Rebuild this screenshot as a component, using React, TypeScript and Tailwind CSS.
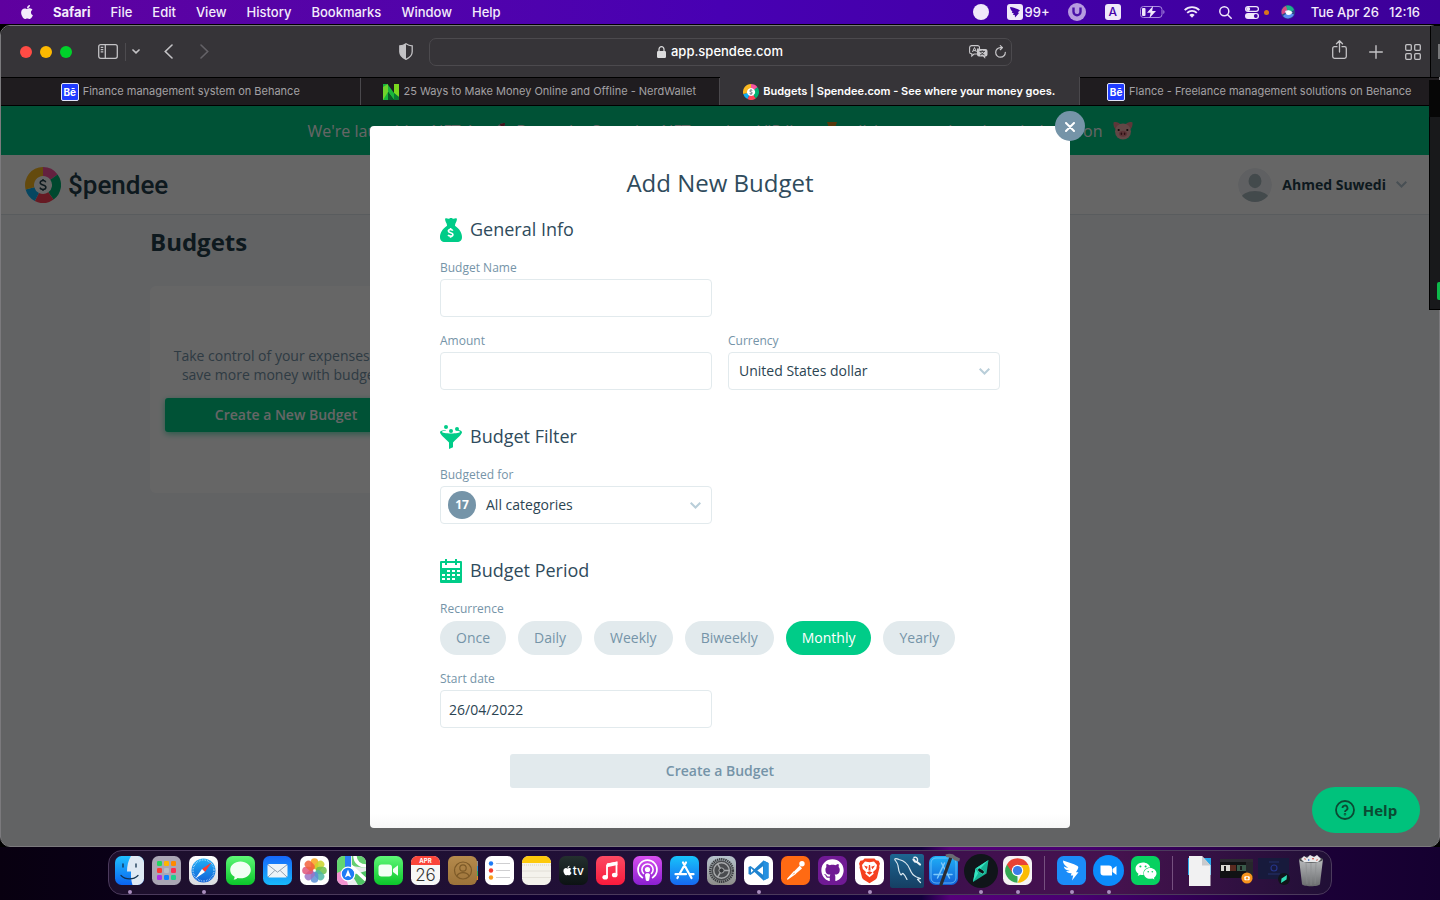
import React from "react";
import { FaApple, FaGithub, FaWeixin } from "react-icons/fa";

const UI = "font-['Inter','Liberation_Sans',sans-serif]";
const WEB = "font-['Open_Sans','Noto_Sans',sans-serif]";

/* ---------- menu bar ---------- */

function MenuBar() {
  const menus = ["File", "Edit", "View", "History", "Bookmarks", "Window", "Help"];
  return (
    <header className="flex h-6 items-center bg-linear-to-r from-[#5f009f] via-[#4800b3] to-[#3d0099] text-[13px] leading-[22px] font-medium text-[#f3ecfb]">
      <FaApple className="ml-[19px] size-4" />
      <nav className="ml-[18px] flex items-center gap-5">
        <span className="font-bold">Safari</span>
        {menus.map((m) => (
          <span key={m}>{m}</span>
        ))}
      </nav>
      <div className="ml-auto flex items-center pr-5">
        <span className="size-4 rounded-full bg-[#f0e8fa]" />
        <svg className="ml-[18px] size-4" viewBox="0 0 16 16">
          <rect width="16" height="16" rx="3" fill="#f0e8fa" />
          <path d="M3 3c3.200.5 6.500 1.200 10 3.500l-2.200 1.700 1.200.8-4 4.500-.2-2.400-2-.4 1-1.400-2-.5.6-1.200C4.300 6.800 3.300 5 3 3z" fill="#4400a8" />
        </svg>
        <span className="ml-[2px]">99+</span>
        <svg className="ml-[18px] size-[18px]" viewBox="0 0 18 18">
          <circle cx="9" cy="9" r="9" fill="#b79be0" />
          <path d="M5.500 4.500v4.300a3.500 3.500 0 0 0 7 0V4.500" fill="none" stroke="#4a12a8" strokeWidth="2.400" />
        </svg>
        <span className="ml-[19px] flex size-4 items-center justify-center rounded-[3px] bg-[#f0e8fa] text-[12px] leading-4 text-[#4400a8]">A</span>
        <svg className="ml-[19px] h-3 w-[25px]" viewBox="0 0 25 12">
          <rect x=".5" y=".5" width="21.500" height="11" rx="3" fill="none" stroke="#a98ade" />
          <path d="M23.300 4v4c1.600-.5 1.600-3.500 0-4z" fill="#a98ade" />
          <rect x="2" y="2" width="3.500" height="8" rx="1" fill="#f0e8fa" />
          <path d="M13 0 7 6.800h3.600L9.500 12l6.500-7h-3.800z" fill="#f0e8fa" />
        </svg>
        <svg className="ml-[19px] h-3 w-4" viewBox="0 0 16 12" fill="none" stroke="#f0e8fa" strokeWidth="1.900">
          <path d="M.7 4.200a10.300 10.300 0 0 1 14.600 0M3.200 6.900a6.800 6.800 0 0 1 9.600 0" />
          <path d="M8 11.700 5.400 9.100a3.700 3.700 0 0 1 5.200 0z" fill="#f0e8fa" stroke="none" />
        </svg>
        <svg className="ml-[19px] size-[13px]" viewBox="0 0 13 13" fill="none" stroke="#f0e8fa" strokeWidth="1.500" strokeLinecap="round">
          <circle cx="5.300" cy="5.300" r="4.500" />
          <path d="m8.700 8.700 3.500 3.500" />
        </svg>
        <svg className="ml-[13px] h-[13px] w-[14px]" viewBox="0 0 14 13">
          <rect x=".6" y=".6" width="12.800" height="4.800" rx="2.400" fill="none" stroke="#f0e8fa" strokeWidth="1.200" />
          <circle cx="3.200" cy="3" r="2" fill="#f0e8fa" />
          <rect y="7" width="14" height="6" rx="3" fill="#f0e8fa" />
          <circle cx="10.800" cy="10" r="1.900" fill="#4400a8" />
        </svg>
        <span className="ml-[5px] size-[5px] rounded-full bg-[#d9761a]" />
        <svg className="ml-[12px] size-[14px]" viewBox="0 0 14 14">
          <circle cx="7" cy="7" r="7" fill="#2b4a86" />
          <path d="M1 9.500A6.500 6.500 0 0 1 4.500 1C7 2 7 5 6 7z" fill="#d84a86" />
          <path d="M5 .7a6.400 6.400 0 0 1 8 4.300c-2.500 2-5 2-6.500 1z" fill="#1fae8c" />
          <path d="M2 11c3-3 8-3 11-1.500A6.500 6.500 0 0 1 2 11z" fill="#5b8df2" />
          <path d="M4 6c3-1.500 6-1 7.500 1.500C9.500 10.500 6.500 10.500 5 9z" fill="#dff3ff" />
          <circle cx="7.600" cy="7.600" r="2.200" fill="#fff" />
        </svg>
        <span className="ml-4">Tue Apr 26</span>
        <span className="ml-[10px]">12:16</span>
      </div>
    </header>
  );
}

/* ---------- Safari chrome ---------- */

function Toolbar() {
  return (
    <div className="grid h-[52px] grid-cols-[1fr_583px_1fr] items-center border-b border-black bg-[#363438] text-[#c3c2c5]">
      <div className="flex items-center pl-[19px]">
        <div className="flex gap-2">
          <span className="size-3 rounded-full bg-[#ff4b45]" />
          <span className="size-3 rounded-full bg-[#fdb900]" />
          <span className="size-3 rounded-full bg-[#00d22a]" />
        </div>
        <button aria-label="Sidebar" className="ml-[26px]">
          <svg className="h-[15px] w-5" viewBox="0 0 20 15" fill="none" stroke="currentColor" strokeWidth="1.300">
            <rect x=".7" y=".7" width="18.600" height="13.600" rx="2" />
            <path d="M7.300.7v13.600M2.700 3.300h2.600M2.700 5.600h2.600M2.700 7.900h2.600" />
          </svg>
        </button>
        <span className="ml-[7px] h-[18px] w-px bg-[#4d4b4f]" />
        <button aria-label="Tab groups" className="ml-[6px]">
          <svg className="h-[5px] w-2" viewBox="0 0 8 5" fill="none" stroke="currentColor" strokeWidth="1.700" strokeLinecap="round">
            <path d="m1 1 3 2.800L7 1" />
          </svg>
        </button>
        <button aria-label="Back" className="ml-6">
          <svg className="h-[15px] w-[9px]" viewBox="0 0 9 15" fill="none" stroke="currentColor" strokeWidth="1.600" strokeLinecap="round">
            <path d="M8 1 1.300 7.500 8 14" />
          </svg>
        </button>
        <button aria-label="Forward" className="ml-[27px] text-[#646267]">
          <svg className="h-[15px] w-[9px]" viewBox="0 0 9 15" fill="none" stroke="currentColor" strokeWidth="1.600" strokeLinecap="round">
            <path d="m1 1 6.700 6.500L1 14" />
          </svg>
        </button>
        <button aria-label="Privacy report" className="mr-4 ml-auto">
          <svg className="h-[17px] w-[14px]" viewBox="0 0 14 17">
            <path d="M7 .7C5 2.100 3 2.700.8 2.800v6C.8 12.500 3.500 14.800 7 16.300c3.500-1.500 6.200-3.800 6.200-7.500v-6C11 2.700 9 2.100 7 .7z" fill="none" stroke="currentColor" strokeWidth="1.300" />
            <path d="M7 .7C5 2.100 3 2.700.8 2.800v6C.8 12.500 3.500 14.800 7 16.300z" fill="currentColor" />
          </svg>
        </button>
      </div>
      <div className="relative flex h-7 items-center justify-center rounded-[7px] border border-[#4c4a4e] text-[13px] font-medium text-white">
        <svg className="mr-[5px] h-3 w-[9px]" viewBox="0 0 9 12">
          <rect y="5" width="9" height="7" rx="1.300" fill="#dcdcdd" />
          <path d="M2 5.500V3.200a2.500 2.500 0 0 1 5 0v2.300" fill="none" stroke="#dcdcdd" strokeWidth="1.200" />
        </svg>
        <span>app.spendee.com</span>
        <div className="absolute right-[5px] flex items-center gap-[7px] text-[#c9c8cb]">
          <svg className="h-[14px] w-[19px]" viewBox="0 0 19 14">
            <path d="M2.500.6h6a2 2 0 0 1 2 2V4H8.500v5H5L2.800 11V8.800H2.300A1.800 1.800 0 0 1 .6 7V2.600a2 2 0 0 1 1.900-2z" fill="none" stroke="currentColor" strokeWidth="1.100" />
            <path d="M3.500 7 5.500 2.500 7.400 7M4.200 5.600h2.600" fill="none" stroke="currentColor" strokeWidth="1" />
            <path d="M10 4h6.500a2 2 0 0 1 2 2v3.500a2 2 0 0 1-2 2h-.3v2.200L14 11.500h-4a2 2 0 0 1-2-2V6a2 2 0 0 1 2-2z" fill="currentColor" />
            <path d="M10.500 6.400h5.500M13.200 5.300v1.100M15 6.400c-.5 1.700-2 3-4 3.600M11.500 6.400c.5 1.700 2 3 4 3.600" fill="none" stroke="#363438" strokeWidth=".9" />
          </svg>
          <svg className="h-[13px] w-[11px]" viewBox="0 0 11 13" fill="none" stroke="currentColor" strokeWidth="1.200" strokeLinecap="round" strokeLinejoin="round">
            <path d="M10.300 7.300A4.800 4.800 0 1 1 5.500 2.600h1.800M5.300.6l2.200 2-2.200 2.100" />
          </svg>
        </div>
      </div>
      <div className="flex items-center justify-end gap-[22px] pr-[18px]">
        <button aria-label="Share" className="-mt-1">
          <svg className="h-[19px] w-[15px]" viewBox="0 0 15 19" fill="none" stroke="currentColor" strokeWidth="1.300" strokeLinecap="round" strokeLinejoin="round">
            <path d="M5 6.700H2.500A1.800 1.800 0 0 0 .7 8.500v8a1.800 1.800 0 0 0 1.800 1.800h10a1.800 1.800 0 0 0 1.800-1.800v-8a1.800 1.800 0 0 0-1.800-1.800H10M7.500 12V1M4.500 3.800l3-3 3 3" />
          </svg>
        </button>
        <button aria-label="New tab">
          <svg className="size-[14px]" viewBox="0 0 14 14" stroke="currentColor" strokeWidth="1.400" strokeLinecap="round">
            <path d="M7 .7v12.600M.7 7h12.600" />
          </svg>
        </button>
        <button aria-label="Tab overview">
          <svg className="size-4" viewBox="0 0 16 16" fill="none" stroke="currentColor" strokeWidth="1.300">
            <rect x=".7" y=".7" width="5.600" height="5.600" rx="1" />
            <rect x="9.700" y=".7" width="5.600" height="5.600" rx="1" />
            <rect x=".7" y="9.700" width="5.600" height="5.600" rx="1" />
            <rect x="9.700" y="9.700" width="5.600" height="5.600" rx="1" />
          </svg>
        </button>
      </div>
    </div>
  );
}

function BehanceIcon() {
  return (
    <span className="flex size-[18px] shrink-0 items-center justify-center rounded-[2px] border border-[#e4e6f8] bg-[#1f3cff] text-[10px] leading-4 font-bold text-white">
      Bē
    </span>
  );
}

function NerdIcon() {
  return (
    <svg className="size-4 shrink-0" viewBox="0 0 16 16">
      <path d="M0 0h4.500L11 9V0h5v16h-5L5 8v8H0z" fill="#19b53c" />
      <path d="M0 3 5 0v8L0 16z" fill="#6fd32c" />
      <path d="M11 0h5v13l-5-4z" fill="#7ad81f" />
      <path d="M5 16V8l6 8z" fill="#0c5a28" />
      <path d="M11 9l5 4v3h-5z" fill="#0a7a33" />
    </svg>
  );
}

const WHEEL = [
  { d: "M18 0A18 18 0 0 1 32.600 7.400L25.300 12.700A9 9 0 0 0 18 9z", c: "#f7549f" },
  { d: "M32.600 7.400A18 18 0 0 1 28.600 32.600L23.300 25.300A9 9 0 0 0 25.300 12.700z", c: "#00b374" },
  { d: "M28.600 32.600A18 18 0 0 1 9.800 34L13.900 26A9 9 0 0 0 23.300 25.300z", c: "#ff4358" },
  { d: "M9.800 34A18 18 0 0 1 .6 22.500L9.300 20.200A9 9 0 0 0 13.900 26z", c: "#11aef0" },
  { d: "M.6 22.500A18 18 0 0 1 18 0V9A9 9 0 0 0 9.300 20.200z", c: "#f9b822" },
];

function Wheel({ className }: { className: string }) {
  return (
    <svg className={className} viewBox="0 0 36 36">
      <circle cx="18" cy="18" r="10.500" fill="#fff" />
      {WHEEL.map((s) => (
        <path key={s.c} d={s.d} fill={s.c} />
      ))}
      <path d="M20.800 15.200c-.5-1.100-1.500-1.600-2.800-1.600-1.600 0-2.800.8-2.800 2.100 0 3.100 5.700 1.400 5.700 4.500 0 1.400-1.200 2.200-2.900 2.200-1.500 0-2.600-.6-3.100-1.800M18 12v1.600M18 22.400V24" fill="none" stroke="#23404d" strokeWidth="1.500" />
    </svg>
  );
}

function Tabs() {
  const tabs = [
    { title: "Finance management system on Behance", icon: <BehanceIcon /> },
    { title: "25 Ways to Make Money Online and Offline - NerdWallet", icon: <NerdIcon /> },
    { title: "Budgets | Spendee.com - See where your money goes.", icon: <Wheel className="size-4 shrink-0" />, active: true },
    { title: "Flance - Freelance management solutions on Behance", icon: <BehanceIcon /> },
  ];
  return (
    <div className="grid h-7 grid-cols-4 border-b border-black text-[11px]">
      {tabs.map((t) => (
        <button
          key={t.title}
          className={
            t.active
              ? "-mt-px flex items-center justify-center gap-1 border-r border-[#4a484c] bg-[#363438] pt-px font-semibold whitespace-nowrap text-white"
              : "flex items-center justify-center gap-1 border-r border-[#4a484c] bg-[#1f1c1f] whitespace-nowrap text-[#a3a1a4] last:border-r-0"
          }
        >
          {t.icon}
          <span>{t.title}</span>
        </button>
      ))}
    </div>
  );
}

/* ---------- page behind the dialog ---------- */

function PigIcon() {
  return (
    <svg className="h-[19px] w-5" viewBox="0 0 20 19">
      <path d="M.5 1.500C3 .3 6 1.500 7.500 3.500L3 8.500C1 7 .2 4 .5 1.500zM19.500 1.500C17 .3 14 1.500 12.500 3.500L17 8.500c2-1.500 2.800-4.500 2.500-7z" fill="#e88a8f" />
      <ellipse cx="10" cy="10.500" rx="8" ry="8" fill="#f7b2ae" />
      <ellipse cx="10" cy="12.800" rx="4" ry="3" fill="#e57f88" />
      <ellipse cx="8.400" cy="12.800" rx=".8" ry="1.300" fill="#6b2530" />
      <ellipse cx="11.600" cy="12.800" rx=".8" ry="1.300" fill="#6b2530" />
      <circle cx="5.700" cy="9" r="1.100" fill="#2a1618" />
      <circle cx="14.300" cy="9" r="1.100" fill="#2a1618" />
    </svg>
  );
}

function PageBackground() {
  return (
    <div className="flex flex-1 flex-col bg-[#f5f7fa] text-[#23404d]">
      <div className="flex h-[49px] items-center justify-center bg-[#00cc88] text-base whitespace-nowrap text-white">
        <span>We're launching NFTs!</span>
        <svg className="mr-[10px] ml-4 size-[18px]" viewBox="0 0 18 18">
          <path d="M17 1c-5 0-9 3-11.500 8.500l3 3C14 10 17 6 17 1z" fill="#c9d3dd" />
          <path d="M17 1c-2 0-4 .5-5.500 1.500l4 4C16.500 5 17 3 17 1zM6 8 2 9.500l2 1.500zM10 12l-1.500 4-1.500-2z" fill="#a3324a" />
        </svg>
        <span>Be on the Spendee NFT product VIP list</span>
        <svg className="mr-[10px] ml-4 size-[18px]" viewBox="0 0 18 18">
          <path d="M4 0h10l-2 6H6z" fill="#d98a1c" />
          <circle cx="9" cy="12" r="5" fill="#f2b632" />
        </svg>
        <span>click to see what the mission is on</span>
        <span className="ml-[10px]">
          <PigIcon />
        </span>
      </div>
      <div className="flex h-[60px] items-center border-b border-[#dfe6ec] bg-white pr-8 pl-6">
        <Wheel className="size-9" />
        <span className="ml-[7px] font-['Roboto','Liberation_Sans',sans-serif] text-[26px] leading-9 font-medium">
          $pendee
        </span>
        <button className="ml-auto flex items-center text-sm font-bold">
          <svg className="size-[34px]" viewBox="0 0 34 34">
            <defs>
              <clipPath id="avatar">
                <circle cx="17" cy="17" r="17" />
              </clipPath>
            </defs>
            <g clipPath="url(#avatar)">
              <circle cx="17" cy="17" r="17" fill="#eef1f4" />
              <ellipse cx="17" cy="13" rx="6.500" ry="7.200" fill="#a9b8bf" />
              <ellipse cx="17" cy="30.500" rx="14" ry="7.500" fill="#a9b8bf" />
            </g>
          </svg>
          <span className="ml-[10px]">Ahmed Suwedi</span>
          <Chevron className="ml-[10px] h-[7px] w-[11px] text-[#b4c6d1]" />
        </button>
      </div>
      <main className="px-[149px] pt-[9px]">
        <h1 className="text-2xl leading-9 font-bold">Budgets</h1>
        <section className="mt-[26px] w-[272px] rounded-[6px] bg-white px-[15px] pt-[60px] pb-[61px] text-center text-sm">
          <p className="leading-[19px] text-[#7594a8]">
            Take control of your expenses and save more money with budgets!
          </p>
          <button className="mt-[14px] h-[34px] w-full rounded-[3px] bg-[#00cc88] font-semibold text-white shadow-[0_2px_6px_#00cc8899]">
            Create a New Budget
          </button>
        </section>
      </main>
    </div>
  );
}

/* ---------- dialog ---------- */

function Chevron({ className }: { className: string }) {
  return (
    <svg className={className} viewBox="0 0 11 7" fill="none" stroke="currentColor" strokeWidth="2">
      <path d="m.7.800 4.800 4.700L10.300.800" />
    </svg>
  );
}

function BagIcon() {
  return (
    <svg className="h-6 w-[22px]" viewBox="0 0 22 24">
      <path d="M5.300.6c1.200-.9 2.200.3 3.200.2 1-.1 1.500-.8 2.500-.8s1.500.7 2.500.8c1 .1 2-1.100 3.200-.2.700.6-.4 3.400-1.500 5.400 0 .8-.1 1.300-.3 1.700C19.500 10.500 22 15 22 19c0 3.500-1.800 5-5 5H5c-3.200 0-5-1.500-5-5 0-4 2.500-8.500 7.100-11.300-.2-.4-.3-.9-.3-1.700C5.700 4 4.600 1.200 5.300.6z" fill="#00cc88" />
      <path d="M12.700 12.700c-.3-.9-1.200-1.200-2.200-1.200-1.300 0-2.100.6-2.100 1.500 0 2.300 4.500 1.100 4.500 3.500 0 1.100-1 1.700-2.300 1.700-1.200 0-2.100-.4-2.500-1.300M10.600 10v1.500M10.600 18.200v1.600" fill="none" stroke="#fff" strokeWidth="1.700" />
    </svg>
  );
}

function FunnelIcon() {
  return (
    <svg className="h-6 w-[22px]" viewBox="0 0 22 24">
      <circle cx="6" cy="2" r="2" fill="#00cc88" />
      <circle cx="17" cy="4" r="2" fill="#00cc88" />
      <path d="M0 7.200c0-1.500 2.500-2 5.500-2.300l.6.700C3.500 5.900 2 6.300 2 7s4 1.500 9 1.500 9-.8 9-1.500c0-.5-1-.9-2.500-1.200l.8-.7C20.500 5.500 22 6.200 22 7.200c0 2-4.500 5.600-9 10.300v4.700L9 24v-6.500C4.500 12.800 0 9.200 0 7.200z" fill="#00cc88" />
      <circle cx="11" cy="6" r="2" fill="#00cc88" />
    </svg>
  );
}

function CalendarIcon() {
  const cells = [
    [7, 11], [12, 11], [17, 11],
    [2, 15], [7, 15], [12, 15], [17, 15],
    [2, 19], [7, 19], [12, 19],
  ];
  return (
    <svg className="h-6 w-[22px]" viewBox="0 0 22 24">
      <path d="M1 2h4V0h2v2h8V0h2v2h4a1 1 0 0 1 1 1v20a1 1 0 0 1-1 1H1a1 1 0 0 1-1-1V3a1 1 0 0 1 1-1z" fill="#00cc88" />
      <path d="M2 4h3v2h2V4h8v2h2V4h3v5H2z" fill="#fff" />
      {cells.map(([x, y]) => (
        <rect key={`${x}-${y}`} x={x} y={y} width="3" height="2" fill="#fff" />
      ))}
    </svg>
  );
}

function SectionTitle({ icon, children }: { icon: React.ReactNode; children: string }) {
  return (
    <h3 className="flex h-6 items-start gap-2 text-lg leading-[22px] text-[#2f4b5c]">
      {icon}
      {children}
    </h3>
  );
}

const LABEL = "block text-xs leading-4 text-[#7594a8]";
const FIELD =
  "mt-[3px] block h-[38px] w-full rounded-[4px] border border-[#e2eaed] bg-white px-2 text-sm text-[#2b4452] outline-none";

function BudgetDialog() {
  const periods = ["Once", "Daily", "Weekly", "Biweekly", "Monthly", "Yearly"];
  return (
    <div
      role="dialog"
      aria-labelledby="dialog-title"
      className="relative w-[700px] rounded-[4px] bg-[linear-gradient(to_top,#f7f7f7,#fff_14px)] px-[70px] pt-[41px] pb-10"
    >
      <button
        aria-label="Close"
        className="absolute -top-[15px] -right-[15px] flex size-[30px] items-center justify-center rounded-full bg-[#7594a8]"
      >
        <svg className="mt-px size-[10px]" viewBox="0 0 10 10" stroke="#fff" strokeWidth="2" strokeLinecap="round">
          <path d="m1 1 8 8M9 1 1 9" />
        </svg>
      </button>
      <h2 id="dialog-title" className="text-center text-2xl leading-8 text-[#2f4b5c]">
        Add New Budget
      </h2>

      <section className="mt-[19px]">
        <SectionTitle icon={<BagIcon />}>General Info</SectionTitle>
        <div className="mt-[18px] grid grid-cols-2 gap-4">
          <div>
            <label htmlFor="name" className={LABEL}>Budget Name</label>
            <input id="name" className={FIELD} />
          </div>
          <div className="col-start-1">
            <label htmlFor="amount" className={LABEL}>Amount</label>
            <input id="amount" className={FIELD} />
          </div>
          <div>
            <label htmlFor="currency" className={LABEL}>Currency</label>
            <div className="relative">
              <select
                id="currency"
                className="mt-[3px] block h-[38px] w-full appearance-none rounded-[4px] border border-[#e2eaed] bg-white px-[10px] text-sm text-[#2b4452] outline-none"
              >
                <option>United States dollar</option>
              </select>
              <Chevron className="pointer-events-none absolute top-4 right-[10px] h-[7px] w-[11px] text-[#b9ced9]" />
            </div>
          </div>
        </div>
      </section>

      <section className="mt-[35px]">
        <SectionTitle icon={<FunnelIcon />}>Budget Filter</SectionTitle>
        <div className="mt-[18px] w-[272px]">
          <span id="budgeted" className={LABEL}>Budgeted for</span>
          <button
            aria-labelledby="budgeted"
            className="mt-[3px] flex h-[38px] w-full items-center rounded-[4px] border border-[#e2eaed] bg-white pr-[10px] pl-[7px] text-sm text-[#2b4452]"
          >
            <span className="flex size-7 items-center justify-center rounded-full bg-[#7594a8] text-xs font-bold text-white">17</span>
            <span className="ml-[10px]">All categories</span>
            <Chevron className="ml-auto h-[7px] w-[11px] text-[#b9ced9]" />
          </button>
        </div>
      </section>

      <section className="mt-[35px]">
        <SectionTitle icon={<CalendarIcon />}>Budget Period</SectionTitle>
        <span className="mt-[18px] block text-xs leading-4 text-[#7594a8]">Recurrence</span>
        <div className="mt-1 flex gap-3">
          {periods.map((p) => (
            <button
              key={p}
              className={
                p === "Monthly"
                  ? "h-[34px] rounded-full bg-[#00cc88] px-4 text-sm text-white"
                  : "h-[34px] rounded-full bg-[#e2eaed] px-4 text-sm text-[#7594a8]"
              }
            >
              {p}
            </button>
          ))}
        </div>
        <div className="mt-4 w-[272px]">
          <label htmlFor="start" className={LABEL}>Start date</label>
          <input id="start" defaultValue="26/04/2022" className={FIELD} />
        </div>
      </section>

      <div className="px-[70px]">
        <button className="mt-[26px] h-[34px] w-full rounded-[3px] bg-[#e2eaed] text-sm font-semibold text-[#7594a8]">
          Create a Budget
        </button>
      </div>
    </div>
  );
}

/* ---------- dock ---------- */

function Tile({ fill, children }: { fill: string; children?: React.ReactNode }) {
  return (
    <svg className="size-[29px] overflow-visible" viewBox="0 0 29 29">
      <rect width="29" height="29" rx="6.500" fill={fill} />
      {children}
    </svg>
  );
}

const PETALS = ["#f8a51b", "#c9d42a", "#6cbf4b", "#4fb7a5", "#5a8fd6", "#9a72c4", "#e0557a", "#f2603a"];
const PAD = ["#1ed760", "#ffb400", "#ff8a00", "#ff3b30", "#b9bcc4", "#ff2d55", "#af30e8", "#0a84ff", "#1fcf8c"];

function DockGradients() {
  const pairs = [
    ["gBlue", "#1fc0ff", "#0a63f0"],
    ["gGreen", "#5ef777", "#0bc62a"],
    ["gMail", "#1667fb", "#18b9fb"],
    ["gRed", "#fb4a63", "#fa1a3c"],
    ["gPurple", "#d84ff0", "#8a1fd0"],
    ["gStore", "#17c3fb", "#1668f0"],
    ["gGray", "#b7c3cc", "#8d8d8a"],
    ["gWhite", "#ffffff", "#d9dbdf"],
    ["gBrown", "#b58a4c", "#9c733a"],
    ["gXcode", "#1fb0f7", "#1260d6"],
    ["gTv", "#24302f", "#0c1213"],
    ["gBin", "#b9bbbd", "#6a6c6e"],
    ["gMysql", "#1d6591", "#153f63"],
  ];
  return (
    <svg className="absolute size-0">
      <defs>
        {pairs.map(([id, a, b]) => (
          <linearGradient key={id} id={id} x1="0" y1="0" x2="0" y2="1">
            <stop offset="0" stopColor={a} />
            <stop offset="1" stopColor={b} />
          </linearGradient>
        ))}
        <clipPath id="tile">
          <rect width="29" height="29" rx="6.500" />
        </clipPath>
      </defs>
    </svg>
  );
}

const GLYPH = "absolute text-white";

type DockItem = { id: string; icon: React.ReactNode; running?: boolean };

const APPS: DockItem[] = [
  {
    id: "Finder",
    running: true,
    icon: (
      <Tile fill="url(#gBlue)">
        <g clipPath="url(#tile)">
          <path d="M16 0c-3 5-4 10-4 15.500h4c-.3 5 .3 9.500 1.500 13.500H29V0z" fill="#dfe9f4" />
        </g>
        <path d="M8 8v3M21 8v3" stroke="#12324f" strokeWidth="1.300" strokeLinecap="round" />
        <path d="M6 19.500c4.500 4.500 12.500 4.500 17 0" fill="none" stroke="#12324f" strokeWidth="1.200" strokeLinecap="round" />
      </Tile>
    ),
  },
  {
    id: "Launchpad",
    icon: (
      <Tile fill="#aaa6b4">
        {PAD.map((c, i) => (
          <rect key={c} x={5 + (i % 3) * 7} y={5 + Math.floor(i / 3) * 7} width="5" height="5" rx="1.300" fill={c} />
        ))}
      </Tile>
    ),
  },
  {
    id: "Safari",
    running: true,
    icon: (
      <Tile fill="url(#gWhite)">
        <circle cx="14.500" cy="14.500" r="12" fill="url(#gXcode)" />
        <circle cx="14.500" cy="14.500" r="10.500" fill="none" stroke="#d6ecff" strokeWidth="1.500" strokeDasharray=".5 1.150" />
        <path d="m22.500 6.500-6.500 9.500-3-3z" fill="#ff3b30" />
        <path d="M6.500 22.500 13 13l3 3z" fill="#fff" />
      </Tile>
    ),
  },
  {
    id: "Messages",
    icon: (
      <Tile fill="url(#gGreen)">
        <path d="M14.500 5.500c5.800 0 10.300 3.700 10.300 8.400s-4.500 8.400-10.300 8.400c-1 0-2-.1-3-.3-1 1-2.400 1.500-4 1.500.8-.8 1.100-1.800 1.100-2.800-2.700-1.500-4.400-4-4.400-6.800 0-4.700 4.500-8.400 10.300-8.400z" fill="#f2fff4" />
      </Tile>
    ),
  },
  {
    id: "Mail",
    icon: (
      <Tile fill="url(#gMail)">
        <rect x="4.500" y="8" width="20" height="13.500" rx="1.800" fill="#eef3f8" />
        <path d="m5 8.800 9.500 7.400L24 8.800M5 21l6.800-6.500M24 21l-6.800-6.500" fill="none" stroke="#8a98a8" strokeWidth=".9" />
      </Tile>
    ),
  },
  {
    id: "Photos",
    icon: (
      <Tile fill="#fff">
        {PETALS.map((c, i) => (
          <rect key={c} x="10.700" y="2.200" width="7.600" height="11" rx="3.800" fill={c} opacity=".85" transform={`rotate(${i * 45} 14.500 14.500)`} />
        ))}
      </Tile>
    ),
  },
  {
    id: "Maps",
    icon: (
      <Tile fill="#e9ecee">
        <g clipPath="url(#tile)">
          <path d="M0 0h8v13L0 18z" fill="#63d66e" />
          <path d="M15 0h14v12l-14-2z" fill="#65cf71" />
          <path d="M29 15v14h-8l-6-10z" fill="#4fc465" />
          <path d="M0 17l7-3 4 15H0z" fill="#f292d0" />
          <path d="M14 10 29 24M18 0c0 6 5 10 11 10" fill="none" stroke="#fff" strokeWidth="3.500" />
          <path d="M8 0h6v14H8z" fill="#2a7ff5" />
        </g>
        <circle cx="11" cy="18" r="6.800" fill="#1e7bf6" stroke="#fff" strokeWidth="1.200" />
        <path d="m11 13.500 3.200 8L11 19.800l-3.200 1.700z" fill="#fff" />
      </Tile>
    ),
  },
  {
    id: "FaceTime",
    icon: (
      <Tile fill="url(#gGreen)">
        <rect x="4.500" y="8.500" width="13.500" height="12" rx="3" fill="#f2fff4" />
        <path d="m19 13 5-3.800v10.600L19 16z" fill="#f2fff4" />
      </Tile>
    ),
  },
  {
    id: "Calendar",
    icon: (
      <Tile fill="#f7f7f7">
        <path d="M6.500 0h16A6.500 6.500 0 0 1 29 6.500V9H0V6.500A6.500 6.500 0 0 1 6.500 0z" fill="#fa453b" />
        <text x="14.500" y="7" textAnchor="middle" fontSize="6" fontWeight="700" fill="#fff">APR</text>
        <text x="14.500" y="25" textAnchor="middle" fontSize="17" fontWeight="300" fill="#333">26</text>
      </Tile>
    ),
  },
  {
    id: "Contacts",
    icon: (
      <svg className="size-[29px] overflow-visible" viewBox="0 0 29 29">
        <path d="M26 5h4v5h-4z" fill="#8d8f92" />
        <path d="M26 10h4v5h-4z" fill="#2a8fd0" />
        <path d="M26 15h4v5h-4z" fill="#2fa860" />
        <path d="M26 20h4v4h-4z" fill="#e08a2a" />
        <rect width="29" height="29" rx="6" fill="url(#gBrown)" />
        <circle cx="15" cy="14.500" r="8.500" fill="none" stroke="#7d5a28" strokeWidth="1.200" />
        <circle cx="15" cy="12" r="3.200" fill="none" stroke="#7d5a28" strokeWidth="1.200" />
        <path d="M9 20c2-4.500 10-4.500 12 0" fill="none" stroke="#7d5a28" strokeWidth="1.200" />
      </svg>
    ),
  },
  {
    id: "Reminders",
    icon: (
      <Tile fill="#fff">
        <path d="M11 7.500h14M11 14.500h14M11 21.500h14" stroke="#c9c9cc" strokeWidth=".9" />
        <circle cx="6" cy="7.500" r="2.200" fill="#1e7bf6" />
        <circle cx="6" cy="14.500" r="2.200" fill="#f5392f" />
        <circle cx="6" cy="21.500" r="2.200" fill="#f99a1c" />
      </Tile>
    ),
  },
  {
    id: "Notes",
    icon: (
      <Tile fill="#f4f2ec">
        <path d="M6.500 0h16A6.500 6.500 0 0 1 29 6.500V7H0v-.5A6.500 6.500 0 0 1 6.500 0z" fill="#fdc90c" />
        <path d="M0 9h29" stroke="#cfcbc0" strokeWidth=".8" strokeDasharray="1 1" />
        <path d="M0 15h29M0 21.500h29" stroke="#dedbd3" strokeWidth=".8" />
      </Tile>
    ),
  },
  {
    id: "TV",
    icon: (
      <>
        <Tile fill="url(#gTv)">
          <text x="19.300" y="18.500" textAnchor="middle" fontSize="12" fontWeight="500" fill="#fff">tv</text>
        </Tile>
        <FaApple className="absolute left-[3px] size-[11px] text-white" />
      </>
    ),
  },
  {
    id: "Music",
    icon: (
      <Tile fill="url(#gRed)">
        <path d="M11 8.500 20.500 6.500v12.200" fill="none" stroke="#fff" strokeWidth="1.800" />
        <path d="M11 7.700 21.400 5.500v3.500L11 11.200z" fill="#fff" />
        <path d="M11 8.500v12.700" stroke="#fff" strokeWidth="1.800" />
        <ellipse cx="9.200" cy="21.300" rx="2.800" ry="2.300" fill="#fff" />
        <ellipse cx="18.700" cy="19" rx="2.800" ry="2.300" fill="#fff" />
      </Tile>
    ),
  },
  {
    id: "Podcasts",
    icon: (
      <Tile fill="url(#gPurple)">
        <g fill="none" stroke="#fff" strokeWidth="1.600" strokeLinecap="round">
          <path d="M9.500 21.700a9.500 9.500 0 1 1 10 0" />
          <path d="M10.500 17.500a5.600 5.600 0 1 1 8 0" />
        </g>
        <circle cx="14.500" cy="13.500" r="2.600" fill="#fff" />
        <path d="M12 19c0-2.500 5-2.500 5 0l-.8 5c-.3 1.300-3.100 1.300-3.400 0z" fill="#fff" />
      </Tile>
    ),
  },
  {
    id: "App Store",
    icon: (
      <Tile fill="url(#gStore)">
        <g fill="none" stroke="#fff" strokeWidth="2.200" strokeLinecap="round">
          <path d="M16 6.500 9.500 18M13 6.500l8.500 15.500M5.500 18.200h10.500M20 18.200h3.500M8 21l-.6 1" />
        </g>
      </Tile>
    ),
  },
  {
    id: "Settings",
    icon: (
      <Tile fill="url(#gGray)">
        <circle cx="14.500" cy="14.500" r="11.300" fill="none" stroke="#3b3d40" strokeWidth="2.400" strokeDasharray="1.400 .7" />
        <circle cx="14.500" cy="14.500" r="10" fill="#4a4c4f" />
        <circle cx="14.500" cy="14.500" r="7.800" fill="none" stroke="#a7a9ab" strokeWidth="1.400" />
        <path d="M14.500 14.500h8M14.500 14.500l-4-6.900M14.500 14.500l-4 6.900" stroke="#a7a9ab" strokeWidth="1.500" />
        <circle cx="14.500" cy="14.500" r="2.600" fill="#35373a" stroke="#a7a9ab" />
      </Tile>
    ),
  },
  {
    id: "Code",
    running: true,
    icon: (
      <Tile fill="#fff">
        <path d="M19.500 4.500 24.500 7v15l-5 2.500-9-8.500-4 3.100-2-1.100v-7l2-1.100 4 3.100z" fill="#1f83cf" />
        <path d="m19 10.300-5.700 4.200 5.700 4.200z" fill="#fff" />
        <path d="m7 12.300 2.300 2.200L7 16.700z" fill="#fff" />
        <path d="M19.500 4.500 24.500 7v15l-5 2.500z" fill="#2590e0" />
      </Tile>
    ),
  },
  {
    id: "Postman",
    icon: (
      <Tile fill="#ff6a13">
        <circle cx="21" cy="7.800" r="2.700" fill="#fff" />
        <path d="M18.800 9.600 12.500 16l2 2 6.500-5.500z" fill="#fff" />
        <path d="m13 16-6.300 7M14.500 17.500 6.700 23" stroke="#fff" strokeWidth="1.300" strokeLinecap="round" />
      </Tile>
    ),
  },
  {
    id: "GitHub",
    icon: (
      <>
        <Tile fill="#701a94" />
        <FaGithub className={`${GLYPH} size-[23px]`} />
      </>
    ),
  },
  {
    id: "Brave",
    running: true,
    icon: (
      <Tile fill="#fff">
        <path d="M9.500 2.500 8 4.300l-2.700.4-1.300 3 .8 2.300-.3 1.500L7 21.500c.3 1 1 1.700 1.800 2.200l5.700 3.600 5.700-3.600c.8-.5 1.500-1.200 1.800-2.200l2.500-10-.3-1.500.8-2.300-1.300-3-2.700-.4-1.500-1.800z" fill="#f5401f" />
        <path d="m14.500 6.200 4.500-.7 3 3.600-.8 3.900-3.200 3 .7 1.800-4.200 3.400-4.200-3.400.7-1.800-3.200-3L7 9.100l3-3.600z" fill="#fff" />
        <path d="m9 9.500 3.800 1.300-1.300 2.500zM20 9.500l-3.800 1.300 1.300 2.500zM13.900 9h1.200l.5 5.500h-2.200zM11.500 16.500l3-1.300 3 1.300-3 2.200z" fill="#f5401f" />
      </Tile>
    ),
  },
  {
    id: "Workbench",
    icon: (
      <svg className="size-[34px] shrink-0" viewBox="0 0 34 34">
        <rect width="34" height="34" rx="2.500" fill="url(#gMysql)" />
        <path d="M5 6c-1-2 2-1.500 4-.5 5 1 9 4.500 11 10 1.500 4 3 6 6.500 7.500l4 1.500c-1 .5-2 .2-3 .8l3 3.200M5 6c1 1.500 2.500 3 3 5.500.3 3 .5 6 2.500 9 1 1.500 1.500-1.500 2.500-1 2 1.500 3 3.500 4 6" fill="none" stroke="#dbe8f0" strokeWidth="1.200" strokeLinecap="round" strokeLinejoin="round" />
        <path d="m23.500 5.500 1.500 2 2 .5 3 2.500" fill="none" stroke="#eef3f7" strokeWidth="2.200" strokeLinecap="round" />
        <path d="M24 3.500c2-1 4 .5 3.500 3" fill="none" stroke="#eef3f7" strokeWidth="1.400" strokeLinecap="round" />
      </svg>
    ),
  },
  {
    id: "Xcode",
    icon: (
      <Tile fill="url(#gXcode)">
        <rect x="2" y="2" width="25" height="25" rx="5" fill="none" stroke="#7fd0ff" strokeWidth=".7" />
        <path d="M15.500 7 8.500 22M12.500 7l8 15M5 18.500h18" fill="none" stroke="#7cc8fa" strokeWidth="1.500" strokeLinecap="round" />
        <path d="M22 1 12 28.500" stroke="#2b2c31" strokeWidth="3.200" strokeLinecap="round" />
        <path d="M16.500-1.500c4-1.500 8-.5 9.500 1.500l5 2.500-.8 3-5-1.200-2-2-6-1.300z" fill="#6a6b72" />
      </Tile>
    ),
  },
  {
    id: "Compass",
    running: true,
    icon: (
      <svg className="size-[34px] shrink-0" viewBox="0 0 34 34">
        <circle cx="17" cy="17" r="17" fill="#10151a" />
        <path d="M24.500 6 11.500 14.500 9 28l13.500-8.500z" fill="#16b394" />
        <path d="M24.500 6 11.500 14.500l4.300.8zM9 28l2.500-13.500 2.700 4.700z" fill="#35e6c0" />
        <ellipse cx="17" cy="17" rx="4" ry="2" transform="rotate(35 17 17)" fill="#10151a" stroke="#35e6c0" strokeWidth=".8" />
      </svg>
    ),
  },
  {
    id: "Chrome",
    running: true,
    icon: (
      <Tile fill="#f5f3f4">
        <path d="M14.500 14.500v12.200A12.200 12.200 0 0 1 3.900 8.400z" fill="#34a853" />
        <path d="M14.500 9h10.900l-.3-.6A12.200 12.200 0 0 0 3.900 8.400L9.700 17.300z" fill="#ea4335" />
        <path d="M14.500 9h10.900a12.200 12.200 0 0 1-10.900 17.700l4.800-9.400z" fill="#fbbc05" />
        <circle cx="14.500" cy="14.500" r="5.700" fill="#fff" />
        <circle cx="14.500" cy="14.500" r="4.600" fill="#3b7de9" />
      </Tile>
    ),
  },
];

const CHAT: DockItem[] = [
  {
    id: "DingTalk",
    running: true,
    icon: (
      <Tile fill="#1b8cf8">
        <path d="M6 4.500c5 2 10 3 14.500 5.500 1.300.8.800 2 .2 3.300l-1.700 3h2.500L15 24.500l1.200-5h-2.400l.8-2.300c-3 .3-4.600-.7-5.300-2.200 1 .2 2.500.2 3.500 0-3.500-.8-5.500-2-6-4.500 1.500.8 3 1.200 4.500 1.300C8 10 5.800 7.500 6 4.500z" fill="#fff" />
      </Tile>
    ),
  },
  {
    id: "Zoom",
    running: true,
    icon: (
      <svg className="size-[31px] shrink-0" viewBox="0 0 31 31">
        <circle cx="15.500" cy="15.500" r="15.500" fill="#0b8cfb" />
        <path d="M7.500 10.500h8.500a3 3 0 0 1 3 3v7h-8.500a3 3 0 0 1-3-3zM19.500 14l4-3v9l-4-3z" fill="#fff" />
      </svg>
    ),
  },
  {
    id: "WeChat",
    icon: (
      <>
        <Tile fill="#07d160" />
        <FaWeixin className={`${GLYPH} size-[22px]`} />
      </>
    ),
  },
];

const FILES: DockItem[] = [
  {
    id: "Document",
    icon: (
      <svg className="h-[30px] w-[23px]" viewBox="0 0 23 30">
        <path d="M0 2h23v17H0z" fill="#2aa7e8" />
        <path d="M1 0h13l8.500 9.500V30H1z" fill="#f1f1f2" />
        <path d="M14 0v9.500h8.500z" fill="#c9cacd" />
      </svg>
    ),
  },
  {
    id: "Recording",
    icon: (
      <svg className="h-[26px] w-[33px] shrink-0" viewBox="0 0 33 26">
        <rect y="1" width="33" height="19" fill="#111214" />
        <path d="M0 1h33v3H0z" fill="#2b2b30" />
        <path d="M26 4h7v15h-7z" fill="#26272b" />
        <path d="M1 7h9v6H1z" fill="#d9d9d2" />
        <path d="M10 7h6v6h-6z" fill="#5b2a20" />
        <path d="M17 7h9v6h-9z" fill="#3a5a4a" />
        <path d="M4 8h2v5H4zM20 8h2v4h-2z" fill="#1a1a1a" />
        <circle cx="27" cy="20" r="5.600" fill="#f7941d" />
        <rect x="24.300" y="18.200" width="5.400" height="4" rx="1" fill="#fff" />
        <circle cx="27" cy="20.200" r="1.200" fill="#f7941d" />
      </svg>
    ),
  },
  {
    id: "Editor window",
    icon: (
      <svg className="h-[28px] w-[32px] shrink-0" viewBox="0 0 32 28">
        <rect y="1" width="31" height="21" fill="#171a3c" />
        <circle cx="16" cy="11" r="3" fill="none" stroke="#25348a" strokeWidth="1.200" />
        <path d="M11 5h10M10 17h12" stroke="#25306a" />
        <circle cx="26" cy="22" r="6" fill="#10151a" />
        <path d="m29 18-5.500 3.500L23 26l5.500-3.500z" fill="#2fe0b8" />
      </svg>
    ),
  },
  {
    id: "Trash",
    icon: (
      <svg className="h-8 w-[26px]" viewBox="0 0 26 32">
        <path d="M1 4h24l-3 25c-.3 3-17.700 3-18 0z" fill="url(#gBin)" />
        <path d="M8 8l1 21M13 8v22M18 8l-1 21" stroke="#8b8d8f" strokeWidth="1" opacity=".6" />
        <ellipse cx="13" cy="4.500" rx="12" ry="3.200" fill="#4b4d50" />
        <path d="m3 4 3-3 3 2 3-3 4 2 3-2 4 4-3 3H6z" fill="#e8e8ea" />
        <path d="m6 3 2 1-1 1zM14 3l2 0-1 2zM19 4l1 1-2 1z" fill="#d0483a" />
        <path d="m10 4 2 1-2 1z" fill="#3a6fd0" />
      </svg>
    ),
  },
];

function DockGroup({ items }: { items: DockItem[] }) {
  return (
    <>
      {items.map((item) => (
        <li key={item.id} title={item.id} className="flex h-[42px] w-[37px] flex-col items-center">
          <span className="relative flex h-[38px] shrink-0 items-center justify-center">{item.icon}</span>
          {item.running && <span className="size-1 shrink-0 rounded-full bg-[#ab8fc0]" />}
        </li>
      ))}
    </>
  );
}

function DockSeparator() {
  return (
    <li className="flex h-[42px] w-[17px] items-center justify-center">
      <span className="h-[34px] w-px bg-[#75507f]" />
    </li>
  );
}

function Dock() {
  return (
    <footer className="flex h-[53px] justify-center bg-[linear-gradient(to_right,#080010,#10002e_35%,#14003c_64%,#56007a_66%,#480070_75%,#1c0038_90%,#150030)] pt-[3px]">
      <DockGradients />
      <ul className="flex h-[45px] items-center rounded-[14px] border border-[#4b3a5c] bg-[linear-gradient(to_right,#1d0f2c,#22103a_50%,#41104f_72%,#46124f_82%,#200f36)] px-[2px]">
        <DockGroup items={APPS} />
        <DockSeparator />
        <DockGroup items={CHAT} />
        <DockSeparator />
        <DockGroup items={FILES} />
      </ul>
    </footer>
  );
}

/* ---------- windows peeking in from the right edge ---------- */

function EdgeWindows() {
  return (
    <aside className="absolute top-px right-0 w-[11px]" aria-hidden="true">
      <div className="ml-px flex h-[51px] items-center justify-end border-l border-black bg-[#26272a]">
        <span className="h-[15px] w-[2px] bg-[#77787a]" />
      </div>
      <div className="mt-[3px] h-[37px] bg-[#060606]" />
      <div className="flex h-[193px] items-end justify-end border-b border-l border-black bg-[#18191b] pb-[9px]">
        <span className="h-[18px] w-[3px] rounded-l-[2px] bg-[#0db84a]" />
      </div>
    </aside>
  );
}

export default function App() {
  return (
    <div className={`flex min-h-screen flex-col bg-black ${UI}`}>
      <MenuBar />
      <div className="relative mt-px flex flex-1 flex-col">
        <div className="flex flex-1 flex-col overflow-hidden rounded-[10px] border border-[#7b7a7d]">
          <Toolbar />
          <Tabs />
          <div className={`relative flex flex-1 flex-col ${WEB}`}>
            <PageBackground />
            <div className="absolute inset-0 flex items-start justify-center bg-black/60 pt-5">
              <BudgetDialog />
            </div>
            <button className="absolute right-[19px] bottom-[13px] flex h-[46px] w-[108px] items-center justify-center gap-2 rounded-full bg-[#00c27c] text-[15px] font-bold text-[#0b4a33]">
              <svg className="size-5" viewBox="0 0 20 20" fill="none" stroke="currentColor" strokeWidth="1.800">
                <circle cx="10" cy="10" r="9" />
                <path d="M7.500 8a2.500 2.500 0 1 1 3.700 2.200c-.8.400-1.200.8-1.200 1.800" />
                <circle cx="10" cy="14.300" r=".4" />
              </svg>
              Help
            </button>
          </div>
        </div>
        <EdgeWindows />
      </div>
      <Dock />
    </div>
  );
}
